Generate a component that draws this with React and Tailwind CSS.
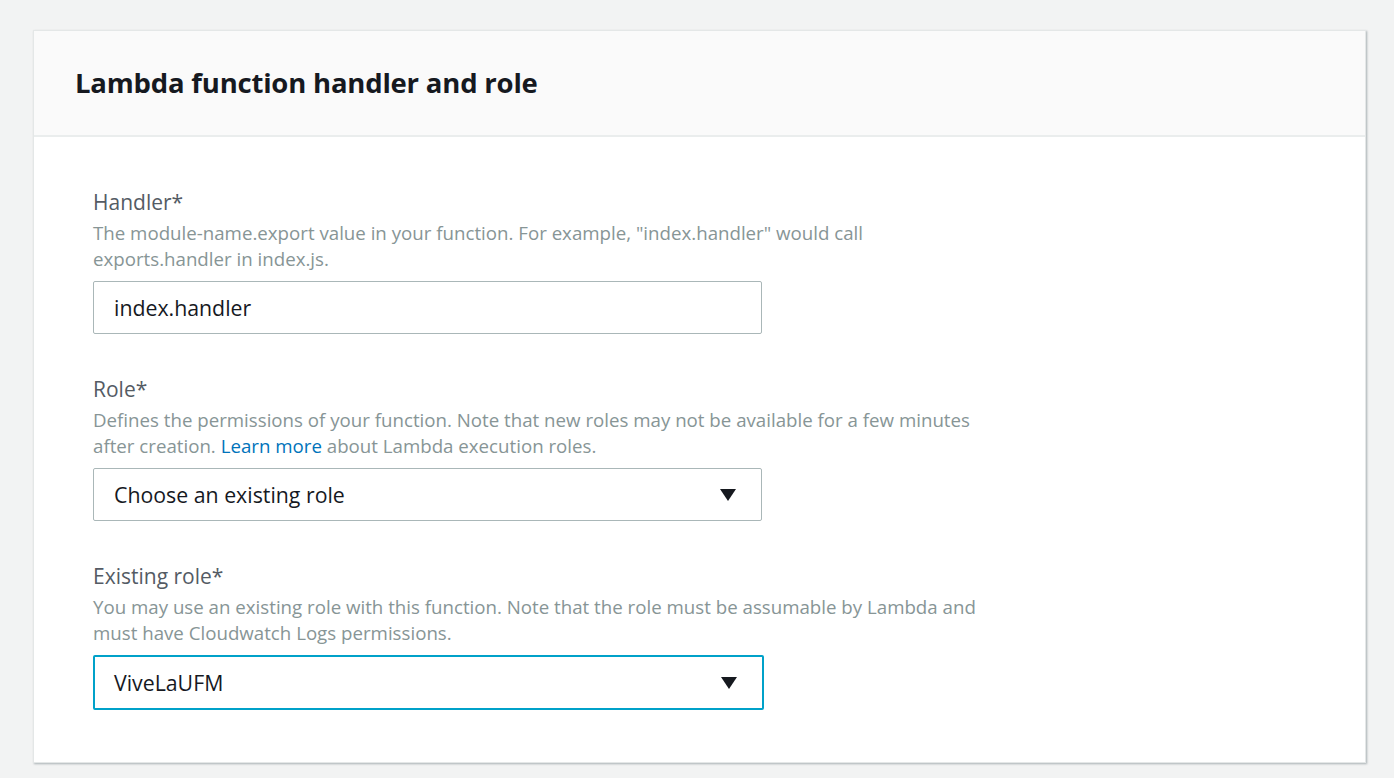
const font = { fontFamily: '"Open Sans", "Noto Sans", sans-serif' }

function Caret() {
  return (
    <svg width="18" height="14" viewBox="0 0 18 14" className="shrink-0">
      <path d="M1 1 H17 L9 13 Z" fill="#16191f" />
    </svg>
  )
}

function Field({ label, children, control }) {
  return (
    <div className="flex flex-col">
      <div className="text-[21px] leading-[26px] text-[#545b64]">{label}</div>
      <div className="mt-[5px] text-[18.7px] leading-[26px] text-[#879596]">{children}</div>
      <div className="mt-[9px]">{control}</div>
    </div>
  )
}

export default function App() {
  return (
    <div className="min-h-screen w-full bg-[#f2f3f3] pt-[30px] pl-[33px] pr-[28px]" style={font}>
      <div className="bg-white border border-[#e4e7e7] shadow-[1px_1px_2px_rgba(0,28,36,0.3)]">
        {/* header */}
        <div className="h-[106px] bg-[#fafafa] border-b-2 border-[#eaeded] flex items-center pl-[41px]">
          <h2 className="text-[27.5px] font-bold text-[#16191f] tracking-[-0.2px]">
            Lambda function handler and role
          </h2>
        </div>

        {/* body */}
        <div className="pl-[59px] pt-[52px] pb-[52px] flex flex-col gap-[42px]">
          <Field
            label="Handler*"
            control={
              <div className="w-[669px] h-[53px] border border-[#aab7b8] rounded-[2px] flex items-center px-[20px] text-[21.3px] text-[#16191f]">
                index.handler
              </div>
            }
          >
            The module-name.export value in your function. For example, "index.handler" would call
            <br />
            exports.handler in index.js.
          </Field>

          <Field
            label="Role*"
            control={
              <div className="w-[669px] h-[53px] border border-[#aab7b8] rounded-[2px] flex items-center justify-between pl-[20px] pr-[24px] text-[21.3px] text-[#16191f]">
                <span>Choose an existing role</span>
                <Caret />
              </div>
            }
          >
            Defines the permissions of your function. Note that new roles may not be available for a few minutes
            <br />
            after creation. <span className="text-[#0073bb]">Learn more</span> about Lambda execution roles.
          </Field>

          <Field
            label="Existing role*"
            control={
              <div className="w-[671px] h-[55px] border-2 border-[#00a1c9] rounded-[2px] flex items-center justify-between pl-[19px] pr-[24px] text-[21.3px] text-[#16191f]">
                <span>ViveLaUFM</span>
                <Caret />
              </div>
            }
          >
            You may use an existing role with this function. Note that the role must be assumable by Lambda and
            <br />
            must have Cloudwatch Logs permissions.
          </Field>
        </div>
      </div>
    </div>
  )
}
